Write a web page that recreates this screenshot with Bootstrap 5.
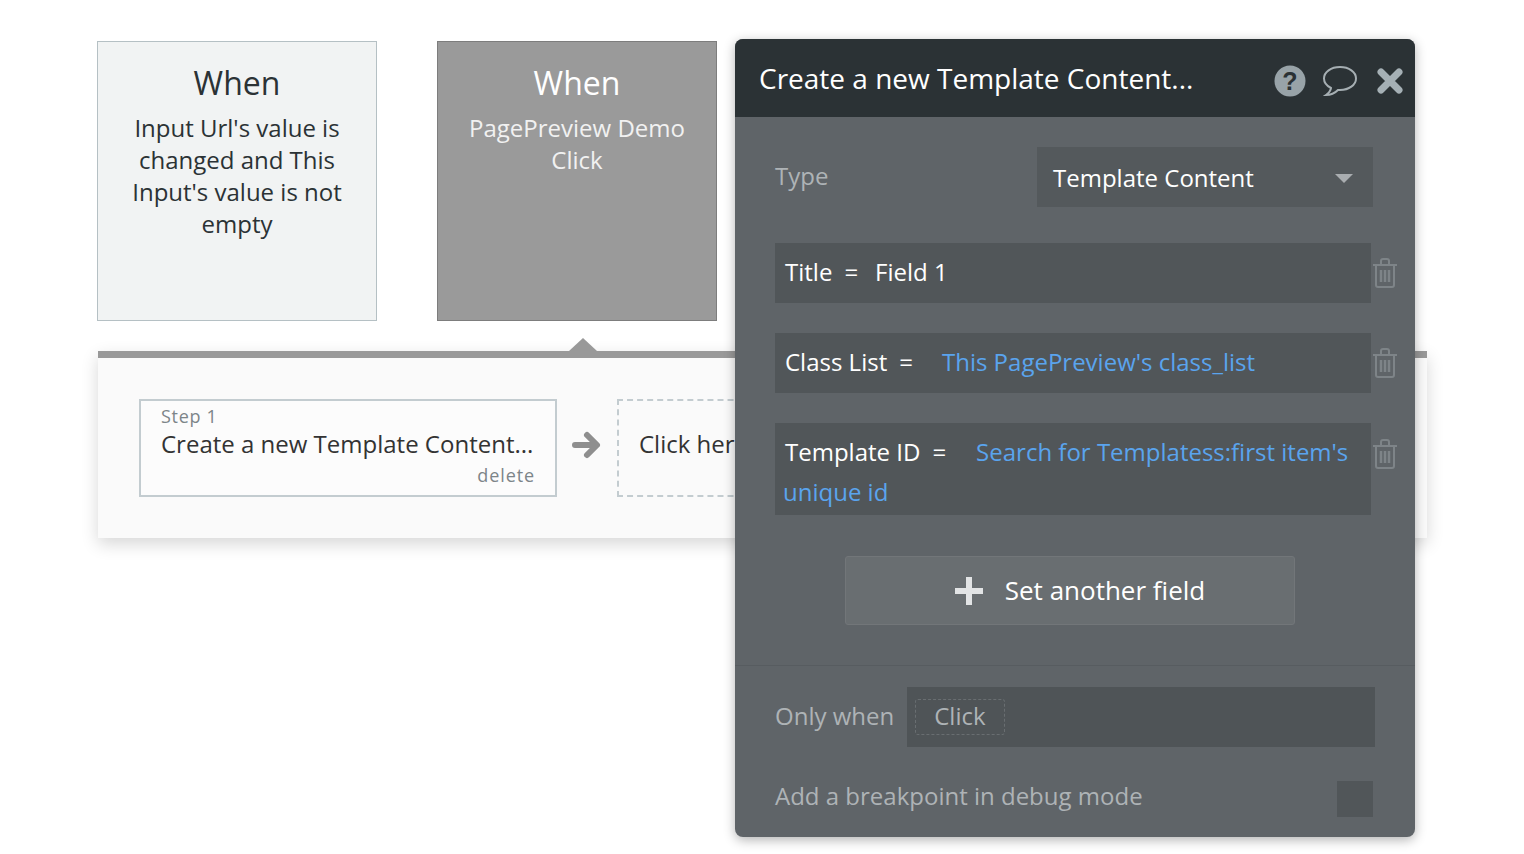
<!DOCTYPE html>
<html lang="en"><head><meta charset="utf-8"><title>Workflow</title>
<link href="https://cdn.jsdelivr.net/npm/bootstrap@5.3.0/dist/css/bootstrap.min.css" rel="stylesheet">
<style>
html,body{height:100%;background:#fff;overflow:hidden}
body{font-family:"Open Sans",sans-serif;position:relative;color:#2b3235;padding:41px 0 0 97px;height:854px}
.when-box{width:280px;height:280px;border:1px solid #b5c0c4;background:#f1f3f3;text-align:center;padding:20px 20px 0;font-size:24px;line-height:32px}
.when-box.dark{background:#9a9a9a;border-color:#7d7d7d;color:#fff}
.when-box.dark p{color:#f1f1f1}
.when-title{font-size:32px;line-height:42px;margin-bottom:8px}
.when-box p{margin:0}
.strip{position:relative;margin:30px 0 0 1px;width:1329px;height:187px;background:#fafafa;border-top:7px solid #999;box-shadow:0 6px 16px rgba(0,0,0,.16);padding:41px 0 0 41px}
.notch{position:absolute;left:471px;top:-20px;width:0;height:0;border-left:14px solid transparent;border-right:14px solid transparent;border-bottom:13px solid #999}
.step-card{width:418px;height:98px;border:2px solid #c3ccd0;background:#fcfcfc;padding:3px 20px 0}
.step-num{font-size:18px;line-height:24px;color:#7d8589;letter-spacing:.7px}
.step-name{font-size:24px;line-height:32px;white-space:nowrap;color:#333}
.step-del{font-size:18px;line-height:24px;color:#7d8589;text-align:right;letter-spacing:.9px;margin-top:3px}
.step-arrow{width:60px;height:92px}
.step-new{width:418px;height:98px;border:2px dashed #c3ccd0;padding:27px 0 0 20px;font-size:24px;line-height:32px;white-space:nowrap;color:#333}
.panel{position:absolute;left:735px;top:39px;width:680px;height:798px;background:#5f6468;border-radius:8px;box-shadow:0 3px 12px rgba(0,0,0,.3);color:#fff;font-size:24px;overflow:hidden}
.panel-head{height:78px;background:#2b3235;padding:0 12px 0 24px}
.panel-title{font-size:28px}
.head-icons{padding-top:5px}
.panel-main{padding:30px 42px 0 40px;height:549px;border-bottom:1px solid #575c60}
.lbl{color:#aeb3b6}
.type-lbl{margin-bottom:2px}
.type-row{height:60px;margin-bottom:36px}
.type-sel{width:336px;height:60px;background:#54595c;padding:2px 20px 0 16px}
.caret-shape{width:0;height:0;border-left:9px solid transparent;border-right:9px solid transparent;border-top:9px solid #a9adb0}
.fld-row{margin-bottom:30px;width:623px}
.fld{width:596px;min-height:60px;background:#515659;padding:0 10px 2px}
.fld.tall{height:92px;padding:9px 8px 0;line-height:40px;white-space:nowrap}
.fld .eq{margin:0 17px 0 12px}
.blue{color:#5aa4ee}
.blue-class{margin-left:12px}
.blue-tpl{margin-left:13px}
.fld-tall-name{padding-left:2px}
.trash{flex:0 0 auto;margin-left:1px}
.add-btn{display:flex;align-items:center;justify-content:center;gap:20px;width:450px;height:69px;margin:41px 0 0 70px;padding-left:18px;background:#696e71;border:1px solid #727679;border-radius:3px;font-size:26px}
.panel-foot{padding:21px 40px 0}
.only-lbl{margin-bottom:2px;white-space:nowrap}
.only-box{flex:0 0 468px;height:60px;background:#4f5457;padding-left:8px;margin-left:13px}
.click-chip{border:1px dashed #696e71;border-radius:3px;padding:0 18px;height:36px;line-height:32px;color:#aeb3b6}
.brk-row{margin-top:34px;height:36px;padding-right:2px}
.brk-lbl{margin-bottom:6px}
.chk-box{width:36px;height:36px;background:#515659}
.gap-bubble{margin-right:19px}
</style></head>
<body>
<div class="d-flex" style="gap:60px">
  <div class="when-box"><div class="when-title">When</div><p>Input Url's value is changed and This Input's value is not empty</p></div>
  <div class="when-box dark"><div class="when-title">When</div><p>PagePreview Demo Click</p></div>
</div>
<div class="strip d-flex align-items-start">
  <span class="notch"></span>
  <div class="step-card">
    <div class="step-num">Step 1</div>
    <div class="step-name">Create a new Template Content...</div>
    <div class="step-del">delete</div>
  </div>
  <div class="step-arrow d-flex justify-content-center align-items-center">
    <svg width="30" height="30" viewBox="0 0 30 30"><path d="M3 15H24M15 5L25 15L15 25" fill="none" stroke="#8e8e8e" stroke-width="6" stroke-linejoin="round" stroke-linecap="round"/></svg>
  </div>
  <div class="step-new">Click here</div>
</div>

<div class="panel">
  <div class="panel-head d-flex align-items-center justify-content-between">
    <div class="panel-title">Create a new Template Content...</div>
    <div class="head-icons d-flex align-items-center">
      <svg width="32" height="32" viewBox="0 0 32 32"><circle cx="16" cy="16" r="15.5" fill="#98a3a8"/><text x="16" y="25" text-anchor="middle" font-family="Liberation Sans" font-weight="700" font-size="25" fill="#2b3235">?</text></svg>
      <svg class="ms-3 gap-bubble" width="36" height="32" viewBox="0 0 36 32"><path d="M18 2C9 2 2 7 2 13.500C2 18 5 21 9 23C8.500 26 7 28 4 30C9 30 13 28 16 25C17 25 17.500 25 18 25C27 25 34 20 34 13.500C34 7 27 2 18 2Z" fill="none" stroke="#a5aeb2" stroke-width="2"/></svg>
      <svg width="26" height="26" viewBox="0 0 26 26"><path d="M4 4L22 22M22 4L4 22" stroke="#a5b0b5" stroke-width="7" stroke-linecap="round"/></svg>
    </div>
  </div>
  <div class="panel-main">
    <div class="type-row d-flex align-items-center justify-content-between">
      <span class="lbl type-lbl">Type</span>
      <div class="type-sel d-flex align-items-center justify-content-between"><span>Template Content</span><span class="caret-shape"></span></div>
    </div>
    <div class="fld-row d-flex align-items-center">
      <div class="fld d-flex align-items-center"><span>Title</span><span class="eq">=</span><span>Field 1</span></div>
      <svg class="trash ms-auto" width="26" height="30" viewBox="0 0 26 30"><use href="#trash"/></svg>
    </div>
    <div class="fld-row d-flex align-items-center">
      <div class="fld d-flex align-items-center"><span>Class List</span><span class="eq">=</span><span class="blue blue-class">This PagePreview's class_list</span></div>
      <svg class="trash ms-auto" width="26" height="30" viewBox="0 0 26 30"><use href="#trash"/></svg>
    </div>
    <div class="fld-row d-flex align-items-start mb-0">
      <div class="fld tall">
        <div class="d-flex"><span class="fld-tall-name">Template ID</span><span class="eq">=</span><span class="blue blue-tpl">Search for Templatess:first item's</span></div>
        <div class="blue">unique id</div>
      </div>
      <svg class="trash ms-auto mt-3" width="26" height="30" viewBox="0 0 26 30"><use href="#trash"/></svg>
    </div>
    <div class="add-btn"><svg width="32" height="32" viewBox="0 0 32 32"><path d="M16 2V30M2 16H30" stroke="#e2e4e5" stroke-width="6"/></svg><span>Set another field</span></div>
  </div>
  <div class="panel-foot">
    <div class="d-flex align-items-center">
      <span class="lbl only-lbl">Only when</span>
      <div class="only-box d-flex align-items-center"><span class="click-chip">Click</span></div>
    </div>
    <div class="brk-row d-flex align-items-center justify-content-between">
      <span class="lbl brk-lbl">Add a breakpoint in debug mode</span>
      <span class="chk-box"></span>
    </div>
  </div>
</div>
<svg width="0" height="0" class="position-absolute"><defs><g id="trash" fill="none" stroke="#7e8488" stroke-width="2"><path d="M1 7H25M9 7V3Q9 1 11 1H15Q17 1 17 3V7M4 7V27Q4 29 6 29H20Q22 29 22 27V7"/><path d="M9 12V24M13 12V24M17 12V24" stroke-width="2.500"/></g></defs></svg>
<script src="https://cdn.jsdelivr.net/npm/bootstrap@5.3.0/dist/js/bootstrap.bundle.min.js"></script>
</body></html>
